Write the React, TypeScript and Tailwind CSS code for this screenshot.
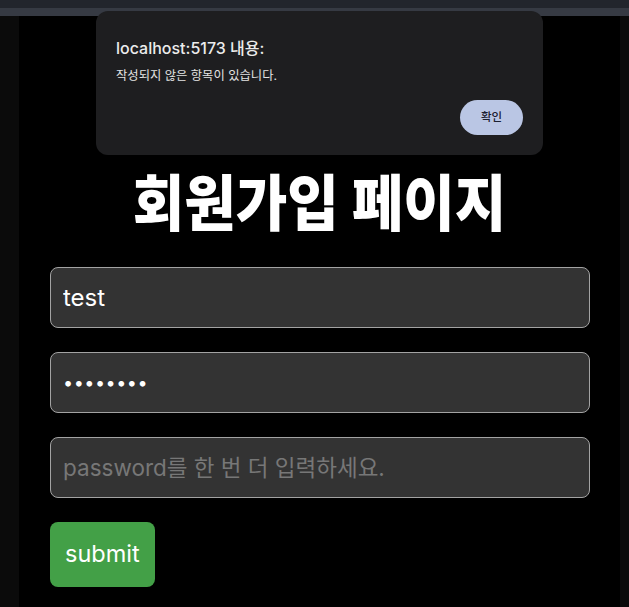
import React, { useState } from 'react';

const sans = "font-['Inter','Noto_Sans_CJK_KR',sans-serif]";

const App: React.FC = () => {
    const [userId, setUserId] = useState('test');
    const [password, setPassword] = useState('12345678');
    const [passwordCheck, setPasswordCheck] = useState('');

    return (
        <div className={`relative min-h-screen flex flex-col bg-[#0b0b0b] ${sans}`}>
            {/* Browser chrome strip */}
            <div className="flex flex-col">
                <div className="h-2 bg-[#22252c]" />
                <div className="h-2 bg-[#363a43]" />
            </div>

            {/* Page */}
            <div className="flex-1 ml-[19px] mr-[9px] bg-black px-[31px] pt-[153px] pb-6">
                <h1 className="text-center text-white text-[56px] leading-[1.1] font-black scale-y-[1.1] font-['Noto_Sans_CJK_KR',sans-serif]">
                    회원가입 페이지
                </h1>

                <form className="mt-[36px] flex flex-col gap-6 items-start" onSubmit={(e) => e.preventDefault()}>
                    <input
                        type="text"
                        value={userId}
                        onChange={(e) => setUserId(e.target.value)}
                        className="w-[540px] h-[61px] px-3 bg-[#333333] border border-[#a3a3a3] rounded-lg text-white text-[24px] outline-none"
                    />
                    <input
                        type="password"
                        value={password}
                        onChange={(e) => setPassword(e.target.value)}
                        className="w-[540px] h-[61px] px-3 bg-[#333333] border border-[#a3a3a3] rounded-lg text-white text-[18px] tracking-[0.5px] outline-none"
                    />
                    <input
                        type="password"
                        placeholder="password를 한 번 더 입력하세요."
                        value={passwordCheck}
                        onChange={(e) => setPasswordCheck(e.target.value)}
                        className="w-[540px] h-[61px] px-3 bg-[#333333] border border-[#a3a3a3] rounded-lg text-white text-[22.5px] outline-none placeholder:text-[#777777]"
                    />
                    <button type="submit" className="h-[65px] px-[15px] bg-[#43a047] rounded-lg text-white text-[23.5px]">
                        submit
                    </button>
                </form>
            </div>

            {/* Alert dialog */}
            <div className="absolute left-[96px] top-[11px] w-[447px] h-[144px] rounded-xl bg-[#1e1e20] px-5 pt-[25px] pb-5 flex flex-col">
                <div className="text-[16px] font-medium text-[#ececec]">localhost:5173 내용:</div>
                <div className="mt-[7px] text-[12.3px] text-[#e3e3e3]">작성되지 않은 항목이 있습니다.</div>
                <div className="mt-auto flex justify-end">
                    <button className="w-[63px] h-[35px] rounded-full bg-[#bac6e4] text-[11.5px] font-medium text-[#1b2030]">
                        확인
                    </button>
                </div>
            </div>
        </div>
    );
};

export default App;
